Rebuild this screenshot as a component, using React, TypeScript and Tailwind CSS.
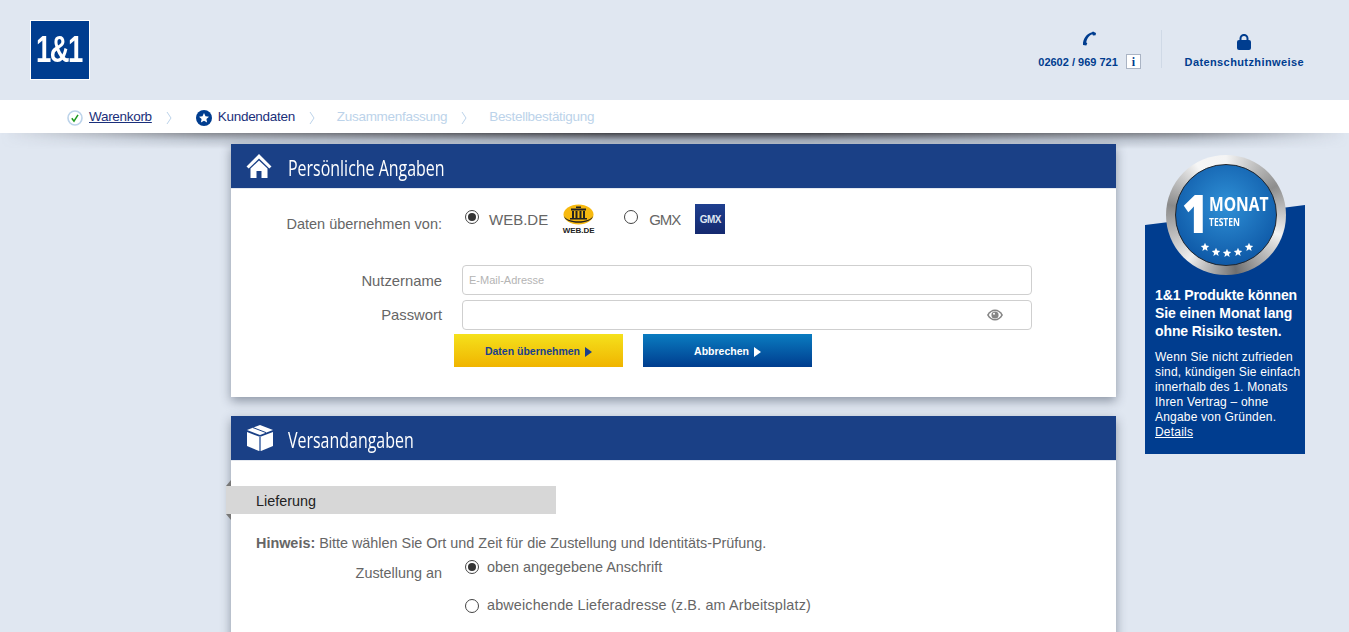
import type { ReactNode } from 'react'

const sans = 'font-["Liberation_Sans",Arial,sans-serif]'

function Radio({ checked }: { checked?: boolean }) {
  return (
    <span className="flex h-[14px] w-[14px] shrink-0 items-center justify-center rounded-full border border-[#444] bg-white">
      {checked && <span className="h-[8px] w-[8px] rounded-full bg-[#333]" />}
    </span>
  )
}

function CheckIcon() {
  return (
    <svg width="16" height="16" viewBox="0 0 16 16">
      <circle cx="8" cy="8" r="7" fill="#fff" stroke="#bcd3ea" strokeWidth="1.6" />
      <path d="M4.8 8.2l2.2 3 4-6.4" fill="none" stroke="#1f9a1f" strokeWidth="1.5" />
    </svg>
  )
}

function StarIcon() {
  return (
    <svg width="16" height="16" viewBox="0 0 16 16">
      <circle cx="8" cy="8" r="8" fill="#003d8f" />
      <path d="M8 3l1.500 3.300 3.500.4-2.600 2.400.7 3.500L8 10.800l-3.100 1.800.7-3.500L3 6.700l3.500-.4z" fill="#fff" />
    </svg>
  )
}

function Chevron() {
  return (
    <svg width="6" height="14" viewBox="0 0 6 14" className="shrink-0">
      <path d="M1 1l4 6-4 6" fill="none" stroke="#bcd3ea" strokeWidth="1" />
    </svg>
  )
}

function HouseIcon() {
  return (
    <svg width="26" height="26" viewBox="0 0 26 26">
      <path d="M13 1L0.500 13.500l2.200 2L13 5.600l10.300 9.900 2.200-2z" fill="#fff" />
      <path d="M4.500 15.500L13 7.500l8.500 8V25h-6v-7h-5v7h-6z" fill="#fff" />
    </svg>
  )
}

function BoxIcon() {
  return (
    <svg width="28" height="28" viewBox="0 0 28 28">
      <path d="M14 1L1 6l13 5 13-5z" fill="#fff" />
      <path d="M1 8l12 4.600V27L1 22z" fill="#fff" />
      <path d="M15 12.600L27 8v14l-12 5z" fill="#fff" />
      <path d="M7 3.600l13 5" stroke="#1a4086" strokeWidth="1" />
      <path d="M14 12v15" stroke="#8fa6cc" strokeWidth="1.500" />
    </svg>
  )
}

function PhoneIcon() {
  return (
    <svg width="15" height="15" viewBox="0 0 15 15">
      <path d="M1 14C0.600 8 4.500 2.500 10 1.200l1-.7 3 1.400-.4 2.400-2.600.2-.7-1.200C7 4.400 4.600 8 4.300 11.600l1 .7-1 2.200z" fill="#003d8f" />
    </svg>
  )
}

function LockIcon() {
  return (
    <svg width="14" height="16" viewBox="0 0 14 16">
      <path d="M3.500 6.500V4.400a3.500 3.500 0 017 0v2.100" fill="none" stroke="#003d8f" strokeWidth="2" />
      <rect x="0" y="6" width="14" height="10" rx="2" fill="#003d8f" />
    </svg>
  )
}

function EyeIcon() {
  return (
    <svg width="16" height="12" viewBox="0 0 16 12">
      <path d="M0 6c2-3.600 4.800-5.500 8-5.500S14 2.400 16 6c-2 3.600-4.800 5.500-8 5.500S2 9.600 0 6z" fill="#858585" />
      <path d="M1.800 6c1.500-2.500 3.500-3.900 6.200-3.900S12.700 3.500 14.200 6c-1.500 2.500-3.500 3.900-6.200 3.900S3.300 8.500 1.800 6z" fill="#fff" />
      <circle cx="8" cy="6" r="3.600" fill="#858585" />
      <circle cx="7" cy="4.800" r="1" fill="#fff" />
    </svg>
  )
}

function WebDeLogo() {
  return (
    <div className="flex h-[31px] w-[31px] flex-col items-center">
      <svg width="31" height="22" viewBox="0 0 31 22">
        <ellipse cx="15.500" cy="10.500" rx="15" ry="10" fill="#f7b90f" />
        <path d="M1 12c3 7 26 7 29 0-1 9-28 9-29 0z" fill="#222" />
        <path d="M13 2.500h5v1.500h-5zM8 4.500h15V6.500H8z" fill="#222" />
        <path d="M9 7h2v7H9zM12.500 7h2v7h-2zM16.500 7h2v7h-2zM20 7h2v7h-2zM7 14h17v1.500H7z" fill="#222" />
      </svg>
      <span className={`${sans} text-[8px] leading-[9px] font-bold text-[#222]`}>WEB.DE</span>
    </div>
  )
}

function SectionCard({ icon, title, children }: { icon: ReactNode; title: string; children: ReactNode }) {
  return (
    <section className="bg-white shadow-[0_4px_10px_rgba(40,50,70,0.45)]">
      <div className="flex h-[45px] items-center border-b border-[#e4e8ef] bg-[#1a4086] pl-[15px]">
        <span className="flex w-[42px] shrink-0">{icon}</span>
        <h2 className='origin-left scale-x-[0.76] pt-[5px] font-["Open_Sans",sans-serif] text-[21px] font-medium whitespace-nowrap text-white'>
          {title}
        </h2>
      </div>
      {children}
    </section>
  )
}

const STARS = [
  [29, 82],
  [40, 87],
  [51, 88],
  [62, 87],
  [73, 82],
]

function Badge() {
  return (
    <div className="absolute top-[-50px] left-[21px] flex h-[120px] w-[120px] items-center justify-center rounded-full bg-[conic-gradient(#f4f4f4,#8d8d8d_60deg,#f2f2f2_110deg,#6f6f6f_170deg,#eee_220deg,#8a8a8a_280deg,#f6f6f6_330deg,#f4f4f4)]">
      <div className="relative h-[102px] w-[102px] rounded-full border border-[#20262e] bg-[radial-gradient(circle_at_50%_40%,#2f90d6,#0f5aa8_75%)] font-['Open_Sans',sans-serif] text-white">
        <span className="absolute top-[12px] left-[6px] origin-left scale-x-[0.85] text-[53px] leading-[72px] font-extrabold">1</span>
        <span className="absolute top-[31px] left-[33px] origin-left scale-x-[0.78] text-[20px] leading-[16px] font-bold">MONAT</span>
        <span className="absolute top-[53px] left-[33px] origin-left scale-x-[0.85] text-[10px] leading-[8px] font-bold">TESTEN</span>
        <svg width="102" height="102" viewBox="0 0 102 102" className="absolute top-0 left-0">
          {STARS.map(([x, y]) => (
            <path
              key={x}
              transform={`translate(${x} ${y})`}
              d="M0-4.200l1.200 2.800 3 .3-2.300 2 .7 3L0 2.300l-2.600 1.600.7-3-2.300-2 3-.3z"
              fill="#fff"
            />
          ))}
        </svg>
      </div>
    </div>
  )
}

export default function App() {
  return (
    <div className={`${sans} h-screen overflow-hidden bg-[#e0e7f1]`}>
      <header className="flex h-[100px] items-start justify-between pr-[45px] pl-[30px]">
        <div className="mt-[20px] flex h-[60px] w-[60px] items-center justify-center border border-white bg-[#003d8f] pr-[2px] text-[37px] font-bold tracking-[-2px] text-white">
          <span className="scale-x-[0.74]">1&amp;1</span>
        </div>
        <div className="mt-[30px] flex text-[11px] font-bold text-[#003d8f]">
          <div className="flex h-[38px] w-[123px] flex-col items-center border-r border-[#cfd9e6] pr-[20px]">
            <span className="mt-[1px]"><PhoneIcon /></span>
            <div className="mt-[7px] flex items-center whitespace-nowrap">
              <span className="pt-[1px]">02602 / 969 721</span>
              <span className="ml-[8px] flex h-[15px] w-[15px] items-center justify-center border border-[#aab4c4] bg-white font-['Liberation_Serif',serif] text-[12px]">
                i
              </span>
            </div>
          </div>
          <div className="ml-[23px] flex flex-col items-center tracking-[0.4px]">
            <span className="mt-[4px]"><LockIcon /></span>
            <span className="mt-[4px] whitespace-nowrap">Datenschutzhinweise</span>
          </div>
        </div>
      </header>

      <nav className="relative z-10 flex h-[33px] items-center bg-white pt-[2px] pl-[67px] text-[13.500px] tracking-[-0.3px]">
        <CheckIcon />
        <a href="#" className="ml-[6px] text-[#1a2f7a] underline">Warenkorb</a>
        <span className="mr-[24px] ml-[14px]"><Chevron /></span>
        <StarIcon />
        <span className="ml-[6px] text-[#1a2f7a]">Kundendaten</span>
        <span className="mr-[22px] ml-[14px]"><Chevron /></span>
        <span className="text-[#bcd3ea]">Zusammenfassung</span>
        <span className="mr-[22px] ml-[14px]"><Chevron /></span>
        <span className="text-[#bcd3ea]">Bestellbestätigung</span>
        {/* shadow fades out towards both page edges */}
        <span className="absolute top-full left-0 h-[16px] w-full bg-[linear-gradient(rgba(50,50,55,0.9),rgba(90,100,115,0.45)_45%,transparent)] [mask-image:linear-gradient(90deg,transparent,rgba(0,0,0,0.55)_15%,black_45%,black_60%,rgba(0,0,0,0.55)_88%,transparent)]" />
      </nav>

      <div className="relative z-20 mt-[11px] flex pl-[231px]">
        <main className="flex w-[885px] shrink-0 flex-col gap-[19px]">
          <SectionCard icon={<HouseIcon />} title="Persönliche Angaben">
            <div className="pt-[15px] pb-[30px] text-[#666]">
              <div className="flex h-[31px] text-[15px]">
                <label className="mt-[10px] w-[211px] text-right text-[14.500px] leading-[20px]">Daten übernehmen von:</label>
                <div className="ml-[23px] flex items-start">
                  <span className="mt-[6px]"><Radio checked /></span>
                  <span className="mt-[1px] ml-[10px] leading-[30px]">WEB.DE</span>
                  <span className="ml-[15px]"><WebDeLogo /></span>
                  <span className="mt-[6px] ml-[30px]"><Radio /></span>
                  <span className="mt-[1px] ml-[11px] leading-[30px] tracking-[-1px]">GMX</span>
                  <span className="ml-[15px] flex h-[30px] w-[30px] items-center justify-center bg-[linear-gradient(#1f3f8f,#14296f)] text-[10px] font-bold tracking-[-0.5px] text-[#dfe6f2]">
                    GMX
                  </span>
                </div>
              </div>
              <div className="mt-[30px] grid grid-cols-[211px_570px] gap-x-[20px] gap-y-[5px] text-[14.800px]">
                <label className="mt-[5px] text-right">Nutzername</label>
                <input
                  placeholder="E-Mail-Adresse"
                  className="h-[30px] rounded-[4px] border border-[#cfcfcf] bg-white px-[6px] text-[11px] outline-none placeholder:text-[#b4b4b4]"
                />
                <label className="mt-[4px] text-right">Passwort</label>
                <div className="flex h-[30px] items-center justify-end rounded-[4px] border border-[#cfcfcf] bg-white pr-[28px]">
                  <EyeIcon />
                </div>
              </div>
              <div className="mt-[4px] ml-[223px] flex gap-[20px] text-[10.500px] font-bold">
                <button className="flex h-[33px] w-[169px] items-center justify-center gap-[5px] bg-[linear-gradient(#f5e11c,#f0b400)] pt-[2px] text-[#1a3f8c]">
                  Daten übernehmen
                  <span className="h-0 w-0 border-y-[5px] border-l-[7px] border-y-transparent border-l-[#1a3f8c]" />
                </button>
                <button className="flex h-[33px] w-[169px] items-center justify-center gap-[5px] bg-[linear-gradient(#0a7cc0,#003d8f)] pt-[2px] text-white">
                  Abbrechen
                  <span className="h-0 w-0 border-y-[5px] border-l-[7px] border-y-transparent border-l-white" />
                </button>
              </div>
            </div>
          </SectionCard>

          <SectionCard icon={<BoxIcon />} title="Versandangaben">
            <div className="pt-[25px] pb-[40px] text-[14.400px] text-[#666]">
              <div className="relative -ml-[5px] flex h-[28px] w-[330px] items-center bg-[#d7d7d7] pt-[4px] pl-[30px] text-[#222]">
                <span className="absolute top-[-6px] left-0 h-0 w-0 border-b-[6px] border-l-[5px] border-b-[#777] border-l-transparent" />
                <span className="absolute bottom-[-6px] left-0 h-0 w-0 border-t-[6px] border-l-[5px] border-t-[#777] border-l-transparent" />
                Lieferung
              </div>
              <p className="mt-[19px] ml-[25px]">
                <b>Hinweis:</b> Bitte wählen Sie Ort und Zeit für die Zustellung und Identitäts-Prüfung.
              </p>
              <div className="mt-[2px] flex">
                <label className="mt-[6px] w-[211px] text-right">Zustellung an</label>
                <div className="ml-[23px] flex flex-col gap-[17px]">
                  <div className="flex items-center gap-[8px]"><Radio checked /> oben angegebene Anschrift</div>
                  <div className="flex items-center gap-[8px] tracking-[0.15px]"><Radio /> abweichende Lieferadresse (z.B. am Arbeitsplatz)</div>
                </div>
              </div>
            </div>
          </SectionCard>
        </main>

        <aside className="relative mt-[61px] ml-[29px] h-[249px] w-[160px] shrink-0">
          <div className="h-full bg-[#003d8f] px-[10px] pt-[81px] text-white [clip-path:polygon(0_20px,100%_0,100%_100%,0_100%)]">
            <p className="text-[14px] leading-[18px] font-bold tracking-[-0.1px] whitespace-nowrap">
              1&amp;1 Produkte können
              <br />
              Sie einen Monat lang
              <br />
              ohne Risiko testen.
            </p>
            <p className="mt-[10px] -mr-[6px] text-[12px] leading-[15px] tracking-[0.2px] whitespace-nowrap">
              Wenn Sie nicht zufrieden
              <br />
              sind, kündigen Sie einfach
              <br />
              innerhalb des 1. Monats
              <br />
              Ihren Vertrag – ohne
              <br />
              Angabe von Gründen.
              <br />
              <a href="#" className="underline">Details</a>
            </p>
          </div>
          <Badge />
        </aside>
      </div>
    </div>
  )
}
